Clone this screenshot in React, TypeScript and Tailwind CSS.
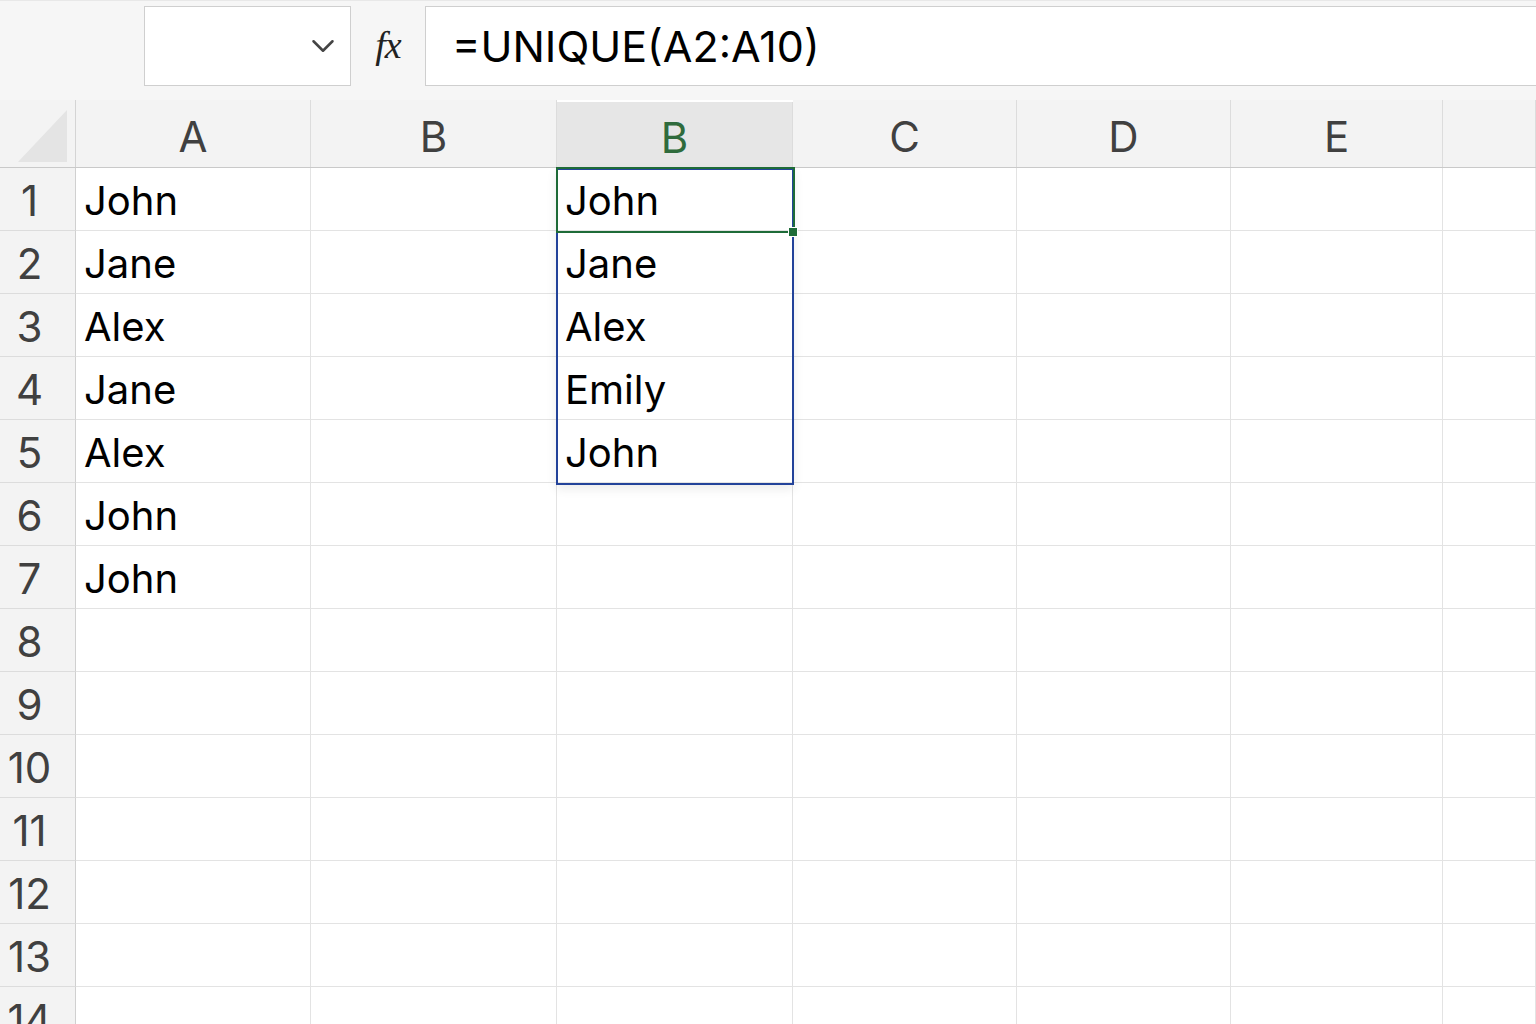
import { ChevronDown } from 'lucide-react';

const colWidths = ['w-[76px]', 'w-[235px]', 'w-[246px]', 'w-[236px]', 'w-[224px]', 'w-[214px]', 'w-[212px]', 'w-[93px]'];
const headers = ['A', 'B', 'B', 'C', 'D', 'E', ''];

const colA = ['John', 'Jane', 'Alex', 'Jane', 'Alex', 'John', 'John'];
const spill = ['John', 'Jane', 'Alex', 'Emily', 'John'];

const rowCount = 14;

function CornerTriangle() {
  return (
    <svg width="76" height="68" viewBox="0 0 76 68" className="block">
      <polygon points="18,62 67,10 67,62" fill="#e4e4e4" />
    </svg>
  );
}

function HeaderRow() {
  return (
    <div className="flex h-[68px] border-b border-[#c9c9c9]">
      <div className={`${colWidths[0]} shrink-0 border-r border-[#d4d4d4] bg-[#f3f3f3]`}>
        <CornerTriangle />
      </div>
      {headers.map((h, i) => {
        const active = i === 2;
        return (
          <div
            key={i}
            className={`${colWidths[i + 1]} shrink-0 flex items-center justify-center pt-[6px] border-r border-[#dcdcdc] text-[42px] leading-none ${
              active ? 'bg-[#e6e6e6] text-[#2f6b3c] mt-[2px]' : 'bg-[#f3f3f3] text-[#404040]'
            }`}
          >
            {h}
          </div>
        );
      })}
    </div>
  );
}

function Row({ n }: { n: number }) {
  const cells = ['', colA[n - 1] ?? '', '', spill[n - 1] ?? '', '', '', '', ''];
  return (
    <div className="flex h-[63px]">
      <div className={`${colWidths[0]} shrink-0 flex items-center justify-center pr-[16px] pt-[4px] bg-[#f3f3f3] border-r border-b border-r-[#d0d0d0] border-b-[#dcdcdc] text-[42px] leading-none text-[#404040]`}>
        {n}
      </div>
      {cells.slice(1).map((c, i) => (
        <div
          key={i}
          className={`${colWidths[i + 1]} shrink-0 flex items-center pl-[8px] pt-[4px] border-r border-b border-[#e3e3e3] text-[40px] leading-none text-black bg-white`}
        >
          {c}
        </div>
      ))}
    </div>
  );
}

export default function App() {
  return (
    <div className="w-[1536px] h-[1024px] overflow-hidden bg-white font-['Inter',sans-serif]">
      {/* Formula bar */}
      <div className="h-[100px] bg-[#f6f6f6] flex items-start pt-[5px] border-t border-[#e8e8e8]">
        <div className="ml-[144px] w-[207px] h-[80px] bg-white border border-[#cfcfcf] flex items-center justify-end pr-[8px]">
          <ChevronDown size={38} strokeWidth={1.6} className="text-[#444]" />
        </div>
        <div className="w-[74px] h-[80px] flex items-center justify-center pb-[2px]">
          <span className="font-['Liberation_Serif',serif] italic text-[38px] text-[#222] tracking-tight">fx</span>
        </div>
        <div className="flex-1 h-[80px] bg-white border border-[#cfcfcf] border-r-0 flex items-center pl-[26px]">
          <span className="text-[43px] leading-none text-black">=UNIQUE(A2:A10)</span>
        </div>
      </div>

      {/* Sheet */}
      <div className="relative">
        <HeaderRow />
        {Array.from({ length: rowCount }, (_, i) => (
          <Row key={i} n={i + 1} />
        ))}

        {/* spill range */}
        <div className="absolute left-[556px] top-[68px] w-[238px] h-[317px] border-2 border-[#23439a] shadow-[0_4px_10px_rgba(0,0,0,0.08)] pointer-events-none" />
        {/* active cell */}
        <div className="absolute left-[556px] top-[67px] w-[239px] h-[66px] border-2 border-[#1e6b38] pointer-events-none" />
        {/* fill handle */}
        <div className="absolute left-[788px] top-[127px] w-[10px] h-[10px] bg-[#1e6b38] border border-white pointer-events-none" />
      </div>
    </div>
  );
}
